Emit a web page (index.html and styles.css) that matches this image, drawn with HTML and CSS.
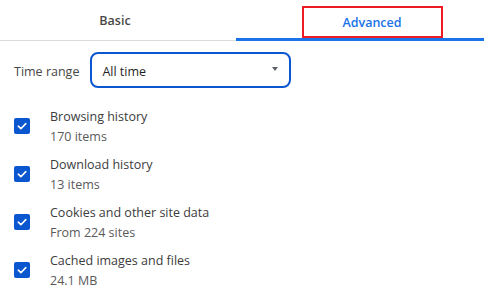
FILE: index.html
```html
<!DOCTYPE html>
<html>
<head>
<meta charset="utf-8">
<link rel="stylesheet" href="styles.css">
</head>
<body>
<div class="dialog">
  <div class="tabs">
    <div class="tab tab-basic">Basic</div>
    <div class="tab tab-adv"><span class="highlight">Advanced</span></div>
  </div>
  <div class="range-row">
    <span class="range-label">Time range</span>
    <div class="select">
      <span>All time</span>
      <span class="arrow"></span>
    </div>
  </div>
  <ul class="items">
    <li class="item">
      <span class="cb"><svg viewBox="0 0 16 16" width="16" height="16"><path d="M4.3 8.2 L6.9 10.7 L11.8 5.6" fill="none" stroke="#fff" stroke-width="1.6" stroke-linecap="round" stroke-linejoin="round"/></svg></span>
      <div class="text"><div class="title">Browsing history</div><div class="sub">170 items</div></div>
    </li>
    <li class="item">
      <span class="cb"><svg viewBox="0 0 16 16" width="16" height="16"><path d="M4.3 8.2 L6.9 10.7 L11.8 5.6" fill="none" stroke="#fff" stroke-width="1.6" stroke-linecap="round" stroke-linejoin="round"/></svg></span>
      <div class="text"><div class="title">Download history</div><div class="sub">13 items</div></div>
    </li>
    <li class="item">
      <span class="cb"><svg viewBox="0 0 16 16" width="16" height="16"><path d="M4.3 8.2 L6.9 10.7 L11.8 5.6" fill="none" stroke="#fff" stroke-width="1.6" stroke-linecap="round" stroke-linejoin="round"/></svg></span>
      <div class="text"><div class="title">Cookies and other site data</div><div class="sub">From 224 sites</div></div>
    </li>
    <li class="item">
      <span class="cb"><svg viewBox="0 0 16 16" width="16" height="16"><path d="M4.3 8.2 L6.9 10.7 L11.8 5.6" fill="none" stroke="#fff" stroke-width="1.6" stroke-linecap="round" stroke-linejoin="round"/></svg></span>
      <div class="text"><div class="title">Cached images and files</div><div class="sub">24.1 MB</div></div>
    </li>
  </ul>
</div>
</body>
</html>
```
FILE: styles.css
```css
html, body {
  margin: 0;
  padding: 0;
  background: #fff;
}
body {
  font-family: "Open Sans", "Noto Sans", sans-serif;
  font-size: 12px;
  color: #3c3c3c;
  width: 490px;
  height: 303px;
  overflow: hidden;
}
.dialog {
  width: 484px;
}
.tabs {
  display: flex;
  height: 40px;
  border-bottom: 1px solid #dcdcdc;
}
.tab {
  display: flex;
  align-items: center;
  justify-content: center;
  font-weight: 600;
  font-size: 12.5px;
  box-sizing: border-box;
}
.tab-basic {
  width: 236px;
  color: #474747;
  padding-right: 6px;
}
.tab-adv {
  flex: 1;
  color: #1a73e8;
  border-bottom: 3px solid #1a73e8;
  margin-bottom: -1px;
  align-items: flex-start;
  padding-top: 6px;
  padding-left: 24px;
}
.highlight {
  display: flex;
  align-items: center;
  justify-content: center;
  width: 141px;
  height: 32px;
  box-sizing: border-box;
  border: 2px solid #ed1c24;
}
.range-row {
  display: flex;
  align-items: center;
  margin-top: 11px;
  padding-left: 14px;
  gap: 11px;
}
.range-label {
  color: #474747;
  font-size: 12.5px;
  padding-top: 2px;
}
.select {
  width: 201px;
  height: 36px;
  box-sizing: border-box;
  border: 2px solid #0b57d0;
  border-radius: 8px;
  display: flex;
  align-items: center;
  justify-content: space-between;
  padding: 2px 11px 0 10px;
  color: #1f1f1f;
  font-size: 12.5px;
}
.arrow {
  width: 0;
  height: 0;
  border-left: 3.5px solid transparent;
  border-right: 3.5px solid transparent;
  border-top: 4px solid #5f6368;
  margin-bottom: 4px;
}
.items {
  list-style: none;
  margin: 14px 0 0 0;
  padding: 0;
}
.item {
  display: flex;
  align-items: center;
  height: 48px;
  padding-left: 14px;
}
.cb {
  width: 16px;
  height: 16px;
  background: #0b57d0;
  border-radius: 2px;
  display: block;
  margin-right: 20px;
}
.cb svg {
  display: block;
}
.text {
  display: flex;
  flex-direction: column;
  padding-top: 2px;
}
.title {
  line-height: 20px;
  color: #3c3c3c;
  font-size: 12.5px;
}
.sub {
  line-height: 20px;
  color: #5a5a5a;
  font-size: 12.5px;
}
```
